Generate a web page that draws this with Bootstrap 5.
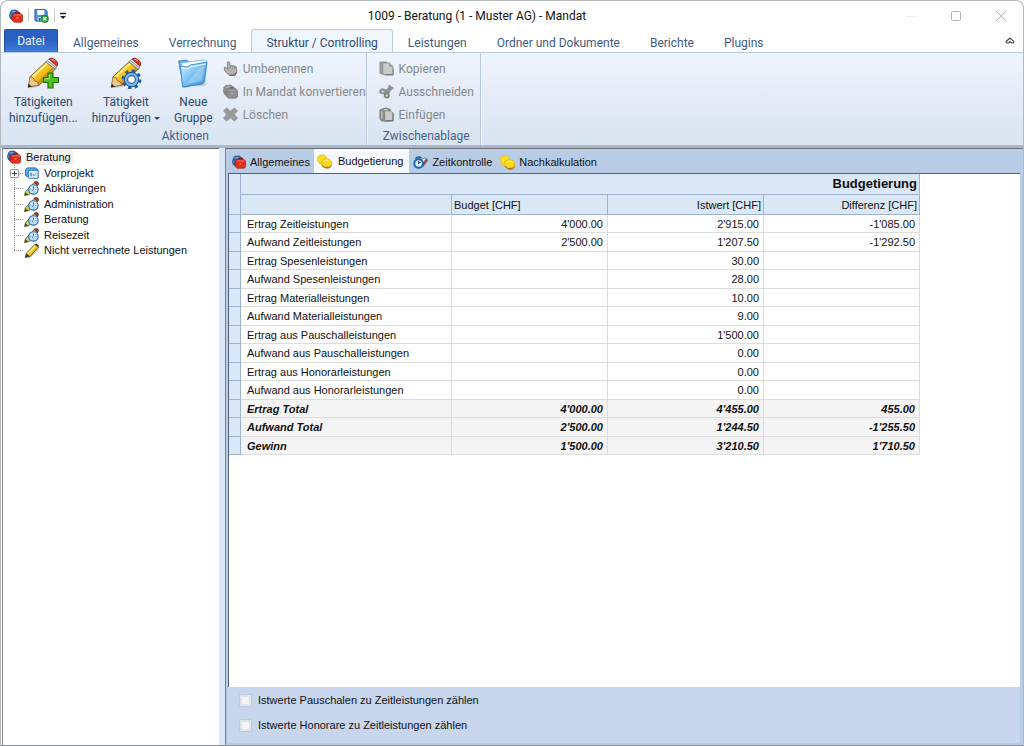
<!DOCTYPE html>
<html lang="de">
<head>
<meta charset="utf-8">
<meta name="viewport" content="width=device-width, initial-scale=1">
<title>1009 - Beratung (1 - Muster AG) - Mandat</title>
<link rel="stylesheet" href="https://cdn.jsdelivr.net/npm/bootstrap@5.3.0/dist/css/bootstrap.min.css">
<style>
:root{--ui:Roboto,"Open Sans",sans-serif;--grid:"Liberation Sans",Arial,sans-serif;--head:#dae7f5;--headline:#9fb2cf}
html,body{height:100%}
body{background:#fff;color:#111;font:12px/16px var(--ui)}
button{color:inherit}
svg{display:block;flex:none}
.app-window{min-height:100vh;border:1px solid #b4b8bd;border-bottom-color:#8e9196;border-radius:8px 8px 0 0;background:#fff;overflow:hidden}
.title-bar{height:29px}
.plain-btn{border:0;background:none;padding:0}
.quick-sep{width:1px;height:13px;background:#c9c9c9}
.win-btn{width:45px;height:28px}
.quick-bar{gap:5px}
.file-btn{width:54px;height:23px;margin-left:3px;background:linear-gradient(#2c62bd,#2a5fc4 45%,#3f80dd);border:1px solid #23519f;border-bottom:0;border-radius:2px 2px 0 0;color:#eef4ff}
.ribbon-tabs{height:23px;border-bottom:1px solid #b9cbde;--bs-nav-link-color:#3f5a80;--bs-nav-link-hover-color:#1f3c66}
.ribbon-tabs .nav-link{height:23px;padding:5px 14px 0;font-size:12px;line-height:16px;border:1px solid transparent;border-bottom:0;margin:0;white-space:nowrap}
.ribbon-tabs .nav-link.active{background:#f0f6fd;border-color:#b9cbde;border-radius:3px 3px 0 0;color:#2d4b77}
.ribbon{height:92px;background:linear-gradient(#eef5fd,#e5ecf7 45%,#d8e4f2);padding-left:4px}
.ribbon-group{border-right:1px solid #b6c6dc;box-shadow:1px 0 0 #f3f8fe}
.big-row{gap:2px}
.clip-group{padding:0 6px 0 12px}
.group-caption{height:17px;color:#46608a;text-align:center}
.big-btn{color:#2f486f;text-align:center;white-space:nowrap}
.big-btn svg{margin-bottom:5px}
.small-btn{color:#85888d;height:23px;gap:5px;white-space:nowrap}
.ribbon-edge{height:3px;background:#a6b7cf}
.tree-pane{width:217px;border-top:1px solid #6d6d6d;border-left:1px solid #8c8c8c;font:11px/15px var(--grid);margin-left:1px}
.splitter{width:6px;background:#dbe7f5;cursor:col-resize}
.tree-row{height:16px;white-space:nowrap}
.tree-kids .tree-row:nth-child(even){height:15px}
.root-label{background:#f1f1f1;padding:0 2px 0 1px}
.branch{width:10px;margin-left:11px;background:repeating-linear-gradient(#8a8a8a 0 1px,transparent 1px 2px) 0 0/1px 100% no-repeat,repeating-linear-gradient(90deg,#8a8a8a 0 1px,transparent 1px 2px) 0 50%/100% 1px no-repeat}
.tree-row:last-child>.branch{background-size:1px 50%,100% 1px}
.expander{position:absolute;left:-4px;top:4px}
.work-pane{background:#b9cce6;border-top:1px solid #6d6d6d;border-left:1px solid #7c8087;padding:0 3px 2px 2px}
.page-tabs{height:24px;font:12px/16px var(--grid)}
.page-tabs .nav-link{color:#111;padding:0 4px;gap:4px;font-size:11px;height:22px;border:0;border-radius:0;margin:2px 0 0}
.page-tabs .nav-link.active{background:#f5f9fe;color:#111;padding:0 6px 0 3px;height:24px;margin:0;gap:6px}
.sheet{background:#fff;border:1px solid #4f617f;border-right:0;border-bottom:0}
.budget{width:691px;table-layout:fixed;border-collapse:separate;border-spacing:0;font:11px/16px var(--grid);color:#111}
.budget th,.budget td{padding:0 4px;border-right:1px solid #dcdcdc;border-bottom:1px solid #dcdcdc;white-space:nowrap;font-weight:400;text-align:right}
.budget tbody tr{height:18px}
.budget tbody tr:nth-child(even){height:19px}
.budget tbody th{text-align:left;padding-left:6px}
.budget thead th{background:var(--head);border-color:var(--headline);padding:0 2px}
.budget thead tr:first-child{height:21px}
.budget thead tr+tr{height:20px}
.budget .big-head{font-size:13px;font-weight:700}
.budget .marker{background:var(--head);border-color:var(--headline);padding:0}
.budget .sum>*{background:#f4f4f4;font-weight:700;font-style:italic}
.budget .sum>.marker{background:var(--head)}
.options{background:#c7d6ec;height:56px;padding:5px 11px;font:11px/16px var(--grid);gap:9px}
.option{gap:6px}
.tick{appearance:none;width:13px;height:13px;border:1px solid #bccbe0;background:#f3f4f6;box-shadow:inset 0 0 0 2px #e0e3e8;margin:0}
</style>
</head>
<body>
<svg width="0" height="0" class="position-absolute" aria-hidden="true">
<defs>
<linearGradient id="gold" x1="0" y1="0" x2="1" y2="1"><stop offset="0" stop-color="#ffe765"/><stop offset=".5" stop-color="#f5bf16"/><stop offset="1" stop-color="#b97d06"/></linearGradient>
<linearGradient id="sky" x1="0" y1="0" x2="1" y2="1"><stop offset="0" stop-color="#d9f1ff"/><stop offset=".5" stop-color="#79bff2"/><stop offset="1" stop-color="#3c8fdc"/></linearGradient>
<symbol id="cases" viewBox="0 0 16 16"><path d="M1.500 3.500 3 1.500 8 1l3 2v6l-6 4-3.500-2L.5 8z" fill="#2467a8" stroke="#173f6e" stroke-width=".7"/><path d="M3 3.500 7.500 3" stroke="#7fc0ea" stroke-width="1.200"/><path d="M2 6v3" stroke="#5aa5dc"/><path d="M7.500 5.800V4.700q0-1 1-1h2.500q1 0 1 1V6" fill="none" stroke="#8e1708" stroke-width="1.200"/><path d="M3.500 7 6 5h7.500l2.200 2v6.500l-1.700 1.700H6L3.500 13z" fill="#e8301c" stroke="#97190b" stroke-width=".7"/><path d="M5.500 6.800h8.500" stroke="#ff7f66"/><path d="M4.500 10h10.500" stroke="#b3200f" stroke-width=".7"/><path d="M8.500 9.200h2.200v1.800H8.500z" fill="#ff7a62"/></symbol>
<symbol id="pencil" viewBox="0 0 32 32"><path d="M5 29 29 9l2 2L12 30l-9 2z" fill="#000" opacity=".18"/><path d="M3 20 19.500 4.500 29 12 12.500 28.500 9 28z" fill="url(#gold)" stroke="#7a5607" stroke-width=".9"/><path d="M5.500 20.500 21 6" stroke="#fff08c" stroke-width="2"/><path d="M11.500 26.500 27 11" stroke="#c98d08" stroke-width="2"/><path d="m3 20-1.800 10.500L12.500 28.500 10.500 25 7.500 24 6.500 21z" fill="#edc78e" stroke="#735021" stroke-width=".7"/><path d="m1.800 27-.8 4 4-.9z" fill="#222"/><path d="m19.500 4.500 3.200-3L31 8.800l-2 3.200z" fill="#dfe1e3" stroke="#6e6e6e" stroke-width=".7"/><path d="m21 3.200 8.700 7" stroke="#8d8d8d"/><path d="M22.700 1.500q2.800-2.300 6.500.8T31.500 8l-.7 1z" fill="#d6352b" stroke="#86180f" stroke-width=".7"/><path d="M25 2.200q2-.6 3.500 1.200" fill="none" stroke="#ff9d8d" stroke-width="1.200"/></symbol>
<symbol id="pencil-plus" viewBox="0 0 32 32"><use href="#pencil" width="31" height="32"/><path d="M21 16h5v4.500h5.500v5H26V31h-5v-5.500h-4.500v-5H21z" fill="#4fc41a" stroke="#21690a" stroke-width="1.200"/><path d="M22.300 17.500v4.300h-4.300" fill="none" stroke="#b6ef83"/></symbol>
<symbol id="pencil-gear" viewBox="0 0 32 32"><use href="#pencil" width="31" height="32"/><circle cx="21.500" cy="22.500" r="8.200" fill="none" stroke="#235c9d" stroke-width="3.400" stroke-dasharray="3.200 3.240"/><circle cx="21.500" cy="22.500" r="5.500" fill="#fff" stroke="#235c9d" stroke-width="4.400"/><circle cx="21.500" cy="22.500" r="5.500" fill="none" stroke="#7fb8ea" stroke-width="2.200"/></symbol>
<symbol id="folder" viewBox="0 0 32 32"><path d="m4 30 23-1 4-3-23 5z" fill="#000" opacity=".15"/><path d="m1.500 4 8-1 3 2 14-2 1 2-2 22-19 3z" fill="#5fa8e0" stroke="#3a84c2" stroke-width=".8"/><path d="m4 6 23-3 3 1-2 21-19 3z" fill="#f5fbff" stroke="#94c6ed" stroke-width=".8"/><path d="m3.500 9 7 1 3-2 16.500-3-3 21-21.500 4z" fill="url(#sky)" stroke="#3689cf" stroke-width=".9"/><path d="m5 11 6 .8 3-2L28.500 7" fill="none" stroke="#effaff"/><path d="m9 27 14-16 4-1-2 14z" fill="#fff" opacity=".25"/></symbol>
<symbol id="save" viewBox="0 0 16 16"><path d="M1 1.500h11l2 2V14H2l-1-1z" fill="#4c95d6" stroke="#225b97"/><path d="M3.500 2h7.500v5.500H3.500z" fill="#f4faff"/><path d="M4 9.500h7V14H4z" fill="#dbe8f4"/><path d="M5 10.500h2V14H5z" fill="#255f9d"/><circle cx="11.500" cy="11.500" r="4" fill="#37a63a" stroke="#1a7020" stroke-width=".7"/><path d="m9.800 9.800 3.400 3.400m0-3.400-3.400 3.400" stroke="#fff" stroke-width="1.200"/></symbol>
<symbol id="hand" viewBox="0 0 16 16"><path d="M4.500 1.500q1.500-1.500 2.800 0V5l1.500-.5 1.200.7 1.500-.4 1 .9 1.500.3.500 1V12l-2 3.300H6.500L1.500 10V6.500l2 .5L5 9z" fill="#b2b2b2" stroke="#777" stroke-width=".8"/><path d="M7.500 5v3.500M10 5.500v3m2.500-2.500v2.500" stroke="#777" stroke-width=".7"/><path d="M7 15h5.500l2-3" fill="none" stroke="#666" stroke-width="1.400"/></symbol>
<symbol id="grey-cases" viewBox="0 0 16 16"><path d="M1 3.500 3 1.500 8 1l3 2v6l-6 4-3.500-2L.5 8z" fill="#909090" stroke="#777" stroke-width=".7"/><path d="M3 3.500 7.500 3" stroke="#bbb" stroke-width="1.200"/><path d="M7.500 5.800V4.700q0-1 1-1h2.500q1 0 1 1V6" fill="none" stroke="#6b6b6b" stroke-width="1.200"/><path d="M3.500 7 6 5h7.500l2.200 2v6.500l-1.700 1.700H6L3.500 13z" fill="#8f8f8f" stroke="#6c6c6c" stroke-width=".7"/><path d="M5.500 6.800h8.500" stroke="#aaa"/><path d="M8.500 9.200h2.200v1.800H8.500z" fill="#b4b4b4"/></symbol>
<symbol id="cross" viewBox="0 0 16 16"><path d="M4 1 8 4.500 12 1l3.500 3L12 8l3.500 4-3.500 3-4-3.500L4 15 .5 12 4 8 .5 4z" fill="#9b9b9b" stroke="#858585" stroke-width=".7"/></symbol>
<symbol id="copy" viewBox="0 0 16 16"><path d="M1 1h7l2 2v11H3l-2-1z" fill="#a2a2a2" stroke="#858585" stroke-width=".8"/><path d="M4 2h7l4 4v9H6l-2-1z" fill="#c9c9c9" stroke="#858585" stroke-width=".8"/><path d="M11 2v4h4z" fill="#999"/><path d="M6 14.500h9V8" fill="none" stroke="#777"/></symbol>
<symbol id="cut" viewBox="0 0 16 16"><path d="m8 9 3-8 1.500 1-1.500 8z" fill="#a5a5a5" stroke="#808080" stroke-width=".7"/><path d="m6 7 8-4 1.500 1.500L8 10z" fill="#999" stroke="#808080" stroke-width=".7"/><path d="M1 6.500 4 5l3 1.500v3L4 10.500 1 9.500z" fill="#999" stroke="#808080"/><path d="m6 10.500 3-1 2 2-.5 3-3 .5-2-1.500z" fill="#909090" stroke="#777"/><circle cx="4" cy="8" r="1.100" fill="#ddd"/><circle cx="8.300" cy="12.300" r="1.100" fill="#ddd"/></symbol>
<symbol id="paste" viewBox="0 0 16 16"><path d="M1 3 7 1l5 1.500V15H3l-2-2z" fill="#8a8a8a" stroke="#707070" stroke-width=".8"/><path d="M5 1.500h4.500v3H5z" fill="#c8c8c8" stroke="#777" stroke-width=".6"/><path d="M6 4h6l3 2.500V15H6z" fill="#c9c9c9" stroke="#777" stroke-width=".8"/><path d="M3 4v9" stroke="#ccc" stroke-width="1.200"/><path d="M7 14.500h8V7" fill="none" stroke="#6d6d6d"/></symbol>
<symbol id="tree-folder" viewBox="0 0 16 16"><path d="M1 4 3 2h9l2 2v8H4L1 10z" fill="#66b4ef" stroke="#1869b4"/><path d="M4 4.500h10.500V13H5l-1-1z" fill="#e6f5ff" stroke="#1869b4"/><path d="M6 7.500h2v3H6zm3.500 1h1v2h-1zm2.500-1.500v3.500" fill="#5aa2dc" stroke="#5aa2dc" stroke-width=".6"/></symbol>
<symbol id="pencil-clock" viewBox="0 0 16 16"><path d="M1 11.500 10.500 1.500 14 4.500 5 14.500 0 15.500z" fill="#e4cf57" stroke="#55591f" stroke-width=".9"/><path d="m10 1.500 2-1.200q3 .2 3 2.700L14 5z" fill="#a83a38" stroke="#5b2626" stroke-width=".6"/><path d="m0 15.500 1.200-3.500 3 2.300z" fill="#35612e"/><circle cx="9.500" cy="9" r="5" fill="#cfeaff" stroke="#2572bc" stroke-width="1.300"/><path d="M9.500 5.800V9L7.700 11" fill="none" stroke="#2b69a8"/><path d="M6.200 9h1.200m2.100 3.200v-1m3.200-2.200h-1m-.6-1.800.5-.5m0 4.600-.5-.5" stroke="#3f8fd2"/></symbol>
<symbol id="pencil-small" viewBox="0 0 16 16"><path d="M3 15.500 15 5v2L6 16z" fill="#000" opacity=".25"/><path d="M2 11 11 1.500l3.800 3L6 14l-5 1.500z" fill="#f3c81e" stroke="#55480d" stroke-width=".9"/><path d="m11 1.500 1.500-1.200 3 2.500-.8 1.500z" fill="#5e3325"/><path d="m.8 15.500 1.200-4.200 3.500 2.700z" fill="#3a3322"/><path d="m3.500 11.300 8-8.300" stroke="#fff4a2" stroke-width="1.300"/></symbol>
<symbol id="coins" viewBox="0 0 16 16"><path d="M6 13q5 3 10-.5l-1 2q-4 3-8 0z" fill="#000" opacity=".3"/><path d="M.7 3.500 3 1h5l2 2.500v4L8 10.500H3L.7 7z" fill="#ffdc17" stroke="#e0b414" stroke-width=".6"/><path d="m5 8 2.500-2.700h5.500L15.500 8v4L13 14.500H8L5 12z" fill="#ffd91a" stroke="#d6a40c" stroke-width=".6"/><path d="m6.500 8.400 1.700-1.800h4.300" fill="none" stroke="#fff58a"/><path d="M5.200 11.800 8 14.200h5l2.300-2.300" fill="none" stroke="#a85f12"/></symbol>
<symbol id="clock" viewBox="0 0 16 16"><path d="m8 5 5-2 2.500 2.500L11 12z" fill="#e8eef5" stroke="#456" stroke-width=".7"/><path d="m10 9.500 4-5.500 1.500 1.500-4.500 6z" fill="#b9494a" stroke="#65302c" stroke-width=".5"/><path d="M2.500 4q3-3 6.500-1" fill="none" stroke="#24578a" stroke-width="1.500"/><circle cx="6" cy="9" r="4.600" fill="#e1f4ff" stroke="#1d69ae" stroke-width="2.200"/><path d="M6 6.500V9l2-1.500" fill="none" stroke="#17406e" stroke-width="1.100"/></symbol>
</defs>
</svg>

<div class="app-window d-flex flex-column">
  <header class="title-bar d-flex align-items-center">
    <div class="quick-bar d-flex align-items-center ps-2">
      <svg width="14" height="14"><use href="#cases"/></svg>
      <span class="quick-sep"></span>
      <button class="plain-btn" aria-label="Speichern"><svg width="15" height="15"><use href="#save"/></svg></button>
      <span class="quick-sep"></span>
      <button class="plain-btn" aria-label="Schnellzugriff anpassen"><svg width="6" height="8"><path d="M0 1.500h6" stroke="#222" stroke-width="1.500"/><path d="M0 4h6L3 7z" fill="#222"/></svg></button>
    </div>
    <div class="flex-grow-1 text-center">1009 - Beratung (1 - Muster AG) - Mandat</div>
    <div class="d-flex">
      <button class="plain-btn win-btn" aria-label="Minimieren"><svg class="mx-auto" width="10" height="10"><path d="M0 5.500h10" stroke="#eee"/></svg></button>
      <button class="plain-btn win-btn" aria-label="Maximieren"><svg class="mx-auto" width="10" height="10"><rect x=".5" y=".5" width="9" height="9" rx="1" fill="none" stroke="#b0b0b0"/></svg></button>
      <button class="plain-btn win-btn" aria-label="Schließen"><svg class="mx-auto" width="10" height="10"><path d="m0 0 10 10M10 0 0 10" stroke="#b8b8b8"/></svg></button>
    </div>
  </header>

  <nav class="nav ribbon-tabs flex-nowrap align-items-end">
    <button class="file-btn p-0">Datei</button>
    <a class="nav-link" href="#">Allgemeines</a>
    <a class="nav-link" href="#">Verrechnung</a>
    <a class="nav-link active" aria-current="page" href="#">Struktur / Controlling</a>
    <a class="nav-link" href="#">Leistungen</a>
    <a class="nav-link" href="#">Ordner und Dokumente</a>
    <a class="nav-link" href="#">Berichte</a>
    <a class="nav-link" href="#">Plugins</a>
    <button class="plain-btn ms-auto me-2 align-self-center" aria-label="Menüband minimieren"><svg width="10" height="8"><path d="M1 4.500 5 1l4 3.500-1 1.500H6.500L5 4.500 3.500 6H2z" fill="none" stroke="#444" stroke-width="1.100"/></svg></button>
  </nav>

  <section class="ribbon d-flex">
    <div class="ribbon-group d-flex flex-column justify-content-between">
      <div class="big-row d-flex align-items-start">
        <button class="plain-btn big-btn px-1 pt-1"><svg class="mx-auto" width="32" height="32"><use href="#pencil-plus"/></svg>Tätigkeiten<br>hinzufügen...</button>
        <button class="plain-btn big-btn px-2 pt-1"><svg class="mx-auto" width="32" height="32"><use href="#pencil-gear"/></svg>Tätigkeit<br>hinzufügen <svg class="d-inline-block m-0 align-middle" width="6" height="6"><path d="M0 1h6L3 4z" fill="#2f486f"/></svg></button>
        <button class="plain-btn big-btn px-1 pt-1"><svg class="mx-auto" width="32" height="32"><use href="#folder"/></svg>Neue<br>Gruppe</button>
        <div class="d-flex flex-column ps-1 pt-1">
          <button class="plain-btn small-btn d-flex align-items-center" disabled><svg width="15" height="15"><use href="#hand"/></svg>Umbenennen</button>
          <button class="plain-btn small-btn d-flex align-items-center" disabled><svg width="15" height="15"><use href="#grey-cases"/></svg>In Mandat konvertieren</button>
          <button class="plain-btn small-btn d-flex align-items-center" disabled><svg width="15" height="15"><use href="#cross"/></svg>Löschen</button>
        </div>
      </div>
      <div class="group-caption">Aktionen</div>
    </div>
    <div class="ribbon-group clip-group d-flex flex-column justify-content-between">
      <div class="d-flex flex-column pt-1">
        <button class="plain-btn small-btn d-flex align-items-center" disabled><svg width="15" height="15"><use href="#copy"/></svg>Kopieren</button>
        <button class="plain-btn small-btn d-flex align-items-center" disabled><svg width="15" height="15"><use href="#cut"/></svg>Ausschneiden</button>
        <button class="plain-btn small-btn d-flex align-items-center" disabled><svg width="15" height="15"><use href="#paste"/></svg>Einfügen</button>
      </div>
      <div class="group-caption">Zwischenablage</div>
    </div>
  </section>
  <div class="ribbon-edge"></div>

  <main class="d-flex flex-grow-1">
    <aside class="tree-pane flex-shrink-0">
      <div class="tree-row d-flex align-items-center ps-1"><svg width="14" height="14"><use href="#cases"/></svg><span class="root-label ms-1">Beratung</span></div>
      <ul class="tree-kids list-unstyled m-0">
        <li class="tree-row d-flex align-items-center"><span class="branch position-relative align-self-stretch"><button class="plain-btn expander" aria-label="Vorprojekt aufklappen"><svg width="9" height="9"><rect x=".5" y=".5" width="8" height="8" rx="1" fill="#fff" stroke="#919191"/><path d="M2 4.500h5M4.500 2v5" stroke="#345"/></svg></button></span><svg class="me-1" width="16" height="15"><use href="#tree-folder"/></svg>Vorprojekt</li>
        <li class="tree-row d-flex align-items-center"><span class="branch align-self-stretch"></span><svg class="me-1" width="16" height="15"><use href="#pencil-clock"/></svg>Abklärungen</li>
        <li class="tree-row d-flex align-items-center"><span class="branch align-self-stretch"></span><svg class="me-1" width="16" height="15"><use href="#pencil-clock"/></svg>Administration</li>
        <li class="tree-row d-flex align-items-center"><span class="branch align-self-stretch"></span><svg class="me-1" width="16" height="15"><use href="#pencil-clock"/></svg>Beratung</li>
        <li class="tree-row d-flex align-items-center"><span class="branch align-self-stretch"></span><svg class="me-1" width="16" height="15"><use href="#pencil-clock"/></svg>Reisezeit</li>
        <li class="tree-row d-flex align-items-center"><span class="branch align-self-stretch"></span><svg class="me-1" width="16" height="15"><use href="#pencil-small"/></svg>Nicht verrechnete Leistungen</li>
      </ul>
    </aside>
    <div class="splitter flex-shrink-0"></div>
    <section class="work-pane flex-grow-1 d-flex flex-column">
      <nav class="nav page-tabs flex-nowrap">
        <a class="nav-link d-flex align-items-center" href="#"><svg width="14" height="14"><use href="#cases"/></svg>Allgemeines</a>
        <a class="nav-link active d-flex align-items-center" aria-current="page" href="#"><svg width="15" height="15"><use href="#coins"/></svg>Budgetierung</a>
        <a class="nav-link d-flex align-items-center" href="#"><svg width="15" height="15"><use href="#clock"/></svg>Zeitkontrolle</a>
        <a class="nav-link d-flex align-items-center" href="#"><svg width="15" height="15"><use href="#coins"/></svg>Nachkalkulation</a>
      </nav>
      <div class="sheet flex-grow-1">
        <table class="budget">
          <colgroup><col style="width:12px"><col style="width:211px"><col style="width:156px"><col style="width:156px"><col style="width:156px"></colgroup>
          <thead>
            <tr><th class="marker" rowspan="2"></th><th class="big-head" colspan="4">Budgetierung</th></tr>
            <tr><th></th><th class="text-start">Budget [CHF]</th><th>Istwert [CHF]</th><th>Differenz [CHF]</th></tr>
          </thead>
          <tbody>
            <tr><td class="marker"></td><th scope="row">Ertrag Zeitleistungen</th><td>4'000.00</td><td>2'915.00</td><td>-1'085.00</td></tr>
            <tr><td class="marker"></td><th scope="row">Aufwand Zeitleistungen</th><td>2'500.00</td><td>1'207.50</td><td>-1'292.50</td></tr>
            <tr><td class="marker"></td><th scope="row">Ertrag Spesenleistungen</th><td></td><td>30.00</td><td></td></tr>
            <tr><td class="marker"></td><th scope="row">Aufwand Spesenleistungen</th><td></td><td>28.00</td><td></td></tr>
            <tr><td class="marker"></td><th scope="row">Ertrag Materialleistungen</th><td></td><td>10.00</td><td></td></tr>
            <tr><td class="marker"></td><th scope="row">Aufwand Materialleistungen</th><td></td><td>9.00</td><td></td></tr>
            <tr><td class="marker"></td><th scope="row">Ertrag aus Pauschalleistungen</th><td></td><td>1'500.00</td><td></td></tr>
            <tr><td class="marker"></td><th scope="row">Aufwand aus Pauschalleistungen</th><td></td><td>0.00</td><td></td></tr>
            <tr><td class="marker"></td><th scope="row">Ertrag aus Honorarleistungen</th><td></td><td>0.00</td><td></td></tr>
            <tr><td class="marker"></td><th scope="row">Aufwand aus Honorarleistungen</th><td></td><td>0.00</td><td></td></tr>
            <tr class="sum"><td class="marker"></td><th scope="row">Ertrag Total</th><td>4'000.00</td><td>4'455.00</td><td>455.00</td></tr>
            <tr class="sum"><td class="marker"></td><th scope="row">Aufwand Total</th><td>2'500.00</td><td>1'244.50</td><td>-1'255.50</td></tr>
            <tr class="sum"><td class="marker"></td><th scope="row">Gewinn</th><td>1'500.00</td><td>3'210.50</td><td>1'710.50</td></tr>
          </tbody>
        </table>
      </div>
      <div class="options d-flex flex-column">
        <div class="option d-flex align-items-center"><input class="tick" type="checkbox" id="flat"><label for="flat">Istwerte Pauschalen zu Zeitleistungen zählen</label></div>
        <div class="option d-flex align-items-center"><input class="tick" type="checkbox" id="fees"><label for="fees">Istwerte Honorare zu Zeitleistungen zählen</label></div>
      </div>
    </section>
  </main>
</div>
<script src="https://cdn.jsdelivr.net/npm/bootstrap@5.3.0/dist/js/bootstrap.bundle.min.js"></script>
</body>
</html>
